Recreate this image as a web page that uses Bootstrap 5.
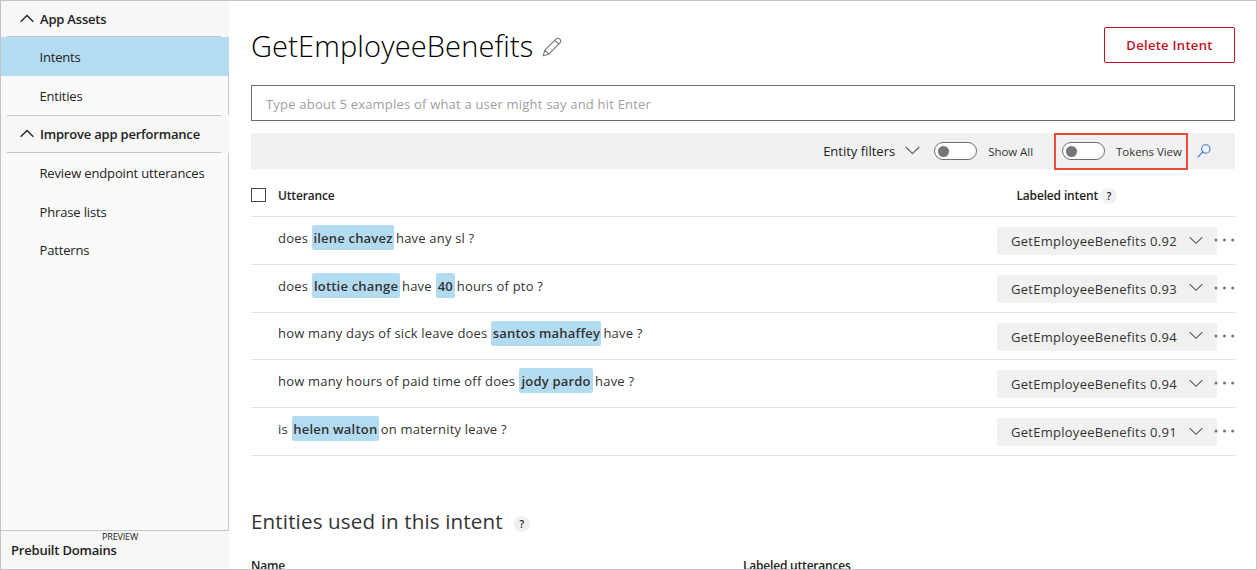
<!DOCTYPE html>
<html lang="en">
<head>
<meta charset="utf-8">
<meta name="viewport" content="width=device-width, initial-scale=1">
<title>GetEmployeeBenefits</title>
<link href="https://cdn.jsdelivr.net/npm/bootstrap@5.3.0/dist/css/bootstrap.min.css" rel="stylesheet">
<style>
body{font-family:"Open Sans","Noto Sans",sans-serif;font-size:13px;line-height:18px;color:#222;background:#fff}
.frame{height:570px;border:1px solid #c3c3c3}
.side{width:228px;background:#fafafa;letter-spacing:-.2px}
.side-head{height:38px;padding:0 8px 0 6px;background:#f7f7f7;font-weight:600}
.side-head>div{border-bottom:1px solid #c8c8c8;padding-left:13px;gap:6px}
.side-head>.line-top{border-top:1px solid #c8c8c8}
.side-first{height:36px}
.side-item{height:38.5px;padding:1px 0 0 38.5px;border-right:1px solid #c8c8c8}
.side-item.lower{padding-top:3px;letter-spacing:-.15px}
.side-item.current{background:#b3dbf2;border-color:#b3dbf2;height:39px;padding-top:0}
.side-fill{border-right:1px solid #c8c8c8}
.side-foot{height:39px;background:#f7f7f7;border-top:1px solid #c8c8c8;padding-left:10px;font-weight:600}
.preview{font-size:9px;line-height:11px;margin-left:91px;font-weight:400;letter-spacing:-.15px}
.foot-label{line-height:16px}
.work{padding:0 21px 0 22px}
.top-row{height:84px;padding-top:26px}
.title-text{font-size:29px;line-height:40px;font-weight:300;color:#000;letter-spacing:.14px;margin-top:-1px}
.delete{width:131px;height:36px;border:1px solid #c50f1f;border-radius:2px;color:#c50f1f;font-size:13px;font-weight:600;letter-spacing:.3px;padding:1px 0 0}
.type-box,.type-box:focus{height:36px;border:1px solid #6f6f6f;border-radius:0;font-size:13px;padding:3px 14px 1px;letter-spacing:.2px;color:#333}
.type-box::placeholder{color:#a0a0a0}
.tools{height:36px;margin-top:12px;background:#f1f1f1}
.pill{width:43px;height:18px;border:1px solid #6f6f6f;border-radius:9px;background:#fff;padding:2px}
.pill i{width:11px;height:11px;border-radius:50%;background:#767676;margin-left:1px}
.tiny{font-size:11.5px;color:#333;letter-spacing:-.05px;padding-top:1px}
.outlined{width:134px;height:37px;border:2px solid #ea4a36;margin-left:20px;padding:0 0 0 6px}
.col-heads{height:48px;border-bottom:1px solid #e2e2e2;font-size:12px;font-weight:600;letter-spacing:-.15px;padding-top:6px}
.tick{width:15px;height:14px;border:1px solid #444;margin:-2px 12px 0 0}
.help{width:16px;height:16px;border-radius:50%;background:#f0f0f0;font-size:10px;line-height:16px;font-weight:600;text-align:center;letter-spacing:0}
.utter{height:47.8px;border-bottom:1px solid #e2e2e2;padding-left:27px}
.said{height:25px;margin-top:8px;letter-spacing:.19px;color:#333;white-space:pre}
.said>span{padding-top:.6px}
.tok{height:25px;background:#b3dbf2;border-radius:2px;font-weight:600;margin:0 2px 0 4px;letter-spacing:.2px;justify-content:center}
.pick{width:220px;height:28px;margin-top:10px;background:#f1f1f1;border-radius:2px;padding:0 14px 0 14px;letter-spacing:.27px;color:#333}
.dots{width:21px;margin:21px 0 0 -3px}
.used{margin-top:51px;height:30px}
.used h2{font-size:20.6px;line-height:30px;font-weight:400;letter-spacing:.13px;margin:-2px 0 0;color:#333}
.cut{height:18px;margin-top:20px;font-size:12px;font-weight:600;letter-spacing:-.2px}
.half{width:492px}
</style>
</head>
<body>
<svg class="d-none">
<symbol id="down" viewBox="0 0 15 9"><path d="M.7 1 7.5 7.6 14.3 1" fill="none" stroke="currentColor" stroke-width="1.1"/></symbol>
<symbol id="up" viewBox="0 0 15 9"><path d="M.7 8 7.5 1.2 14.3 8" fill="none" stroke="currentColor" stroke-width="1.4"/></symbol>
<symbol id="dots" viewBox="0 0 21 4"><g fill="#767676"><circle cx="2" cy="2" r="1.5"/><circle cx="10.5" cy="2" r="1.5"/><circle cx="18.7" cy="2" r="1.5"/></g></symbol>
</svg>
<div class="frame d-flex overflow-hidden">
  <nav class="side d-flex flex-column flex-shrink-0">
    <div class="side-head side-first"><div class="d-flex align-items-center h-100"><svg width="14" height="9"><use href="#up"/></svg>App Assets</div></div>
    <div class="side-item current d-flex align-items-center">Intents</div>
    <div class="side-item d-flex align-items-center">Entities</div>
    <div class="side-head"><div class="d-flex align-items-center h-100 line-top"><svg width="14" height="9"><use href="#up"/></svg>Improve app performance</div></div>
    <div class="side-item lower d-flex align-items-center">Review endpoint utterances</div>
    <div class="side-item lower d-flex align-items-center">Phrase lists</div>
    <div class="side-item lower d-flex align-items-center">Patterns</div>
    <div class="side-fill flex-grow-1"></div>
    <div class="side-foot"><div class="preview">PREVIEW</div><div class="foot-label">Prebuilt Domains</div></div>
  </nav>
  <main class="work flex-grow-1">
    <div class="top-row d-flex justify-content-between align-items-start">
      <div class="d-flex align-items-center"><span class="title-text">GetEmployeeBenefits</span>
        <svg style="margin-left:8px" width="20" height="20" viewBox="0 0 20 20" fill="none" stroke="#777" stroke-width="1.1" stroke-linejoin="round"><path d="M1.2 18.8 2.8 13.2 14.3 1.8Q16 .6 17.8 2.2 19.4 4 18.2 5.7L6.8 17.2ZM2.8 13.2 6.8 17.2M12.8 3.3 16.7 7.2"/></svg></div>
      <button class="btn delete" type="button">Delete Intent</button>
    </div>
    <input class="form-control type-box shadow-none" placeholder="Type about 5 examples of what a user might say and hit Enter">
    <div class="tools d-flex align-items-center justify-content-end">
      <span>Entity filters</span><svg class="filter-arrow" width="15" height="9" style="margin:-2px 14px 0 10px;color:#555"><use href="#down"/></svg>
      <span class="pill d-flex align-items-center"><i></i></span><span class="tiny" style="margin:0 1px 0 11px">Show All</span>
      <div class="outlined d-flex align-items-center flex-shrink-0"><span class="pill d-flex align-items-center"><i></i></span><span class="tiny text-nowrap" style="margin-left:11px">Tokens View</span></div>
      <svg style="margin:-1px 24px 0 9px" width="14" height="14" viewBox="0 0 14 14" fill="none" stroke="#3c78d8" stroke-width="1.1"><circle cx="8.8" cy="5" r="4.2"/><path d="M5.8 8 .6 13.3"/></svg>
    </div>
    <div class="col-heads d-flex align-items-center"><span class="tick"></span><span>Utterance</span><span class="ms-auto">Labeled intent</span><span class="help" style="margin:0 118px 0 3px">?</span></div>
    <div id="rows"></div>
    <div class="used d-flex align-items-center"><h2>Entities used in this intent</h2><span class="help" style="margin:5px 0 0 11px">?</span></div>
    <div class="cut d-flex"><span class="half">Name</span><span>Labeled utterances</span></div>
  </main>
</div>
<script src="https://cdn.jsdelivr.net/npm/bootstrap@5.3.0/dist/js/bootstrap.bundle.min.js"></script>
<script>
// Square brackets mark the labelled entity tokens; the width of each follows in the third field.
const utterances = [
  ["does[ilene chavez]have any sl ?", "0.92", [82]],
  ["does[lottie change]have[40]hours of pto ?", "0.93", [88, 19]],
  ["how many days of sick leave does[santos mahaffey]have ?", "0.94", [110]],
  ["how many hours of paid time off does[jody pardo]have ?", "0.94", [74]],
  ["is[helen walton]on maternity leave ?", "0.91", [87]]
];
document.getElementById("rows").innerHTML = utterances.map(([text, score, widths]) =>
  `<div class="utter d-flex align-items-start"><div class="said d-flex align-items-center">${
    text.split(/[\[\]]/).map((t, i) => i % 2 ? `<span class="tok d-flex align-items-center" style="width:${widths[(i - 1) / 2]}px">${t}</span>` : `<span>${t}</span>`).join("")
  }</div><div class="pick ms-auto d-flex align-items-center justify-content-between"><span>GetEmployeeBenefits ${score}</span><svg width="14" height="9" style="margin-top:-2px;color:#555"><use href="#down"/></svg></div><svg class="dots" height="4"><use href="#dots"/></svg></div>`).join("");
</script>
</body>
</html>
